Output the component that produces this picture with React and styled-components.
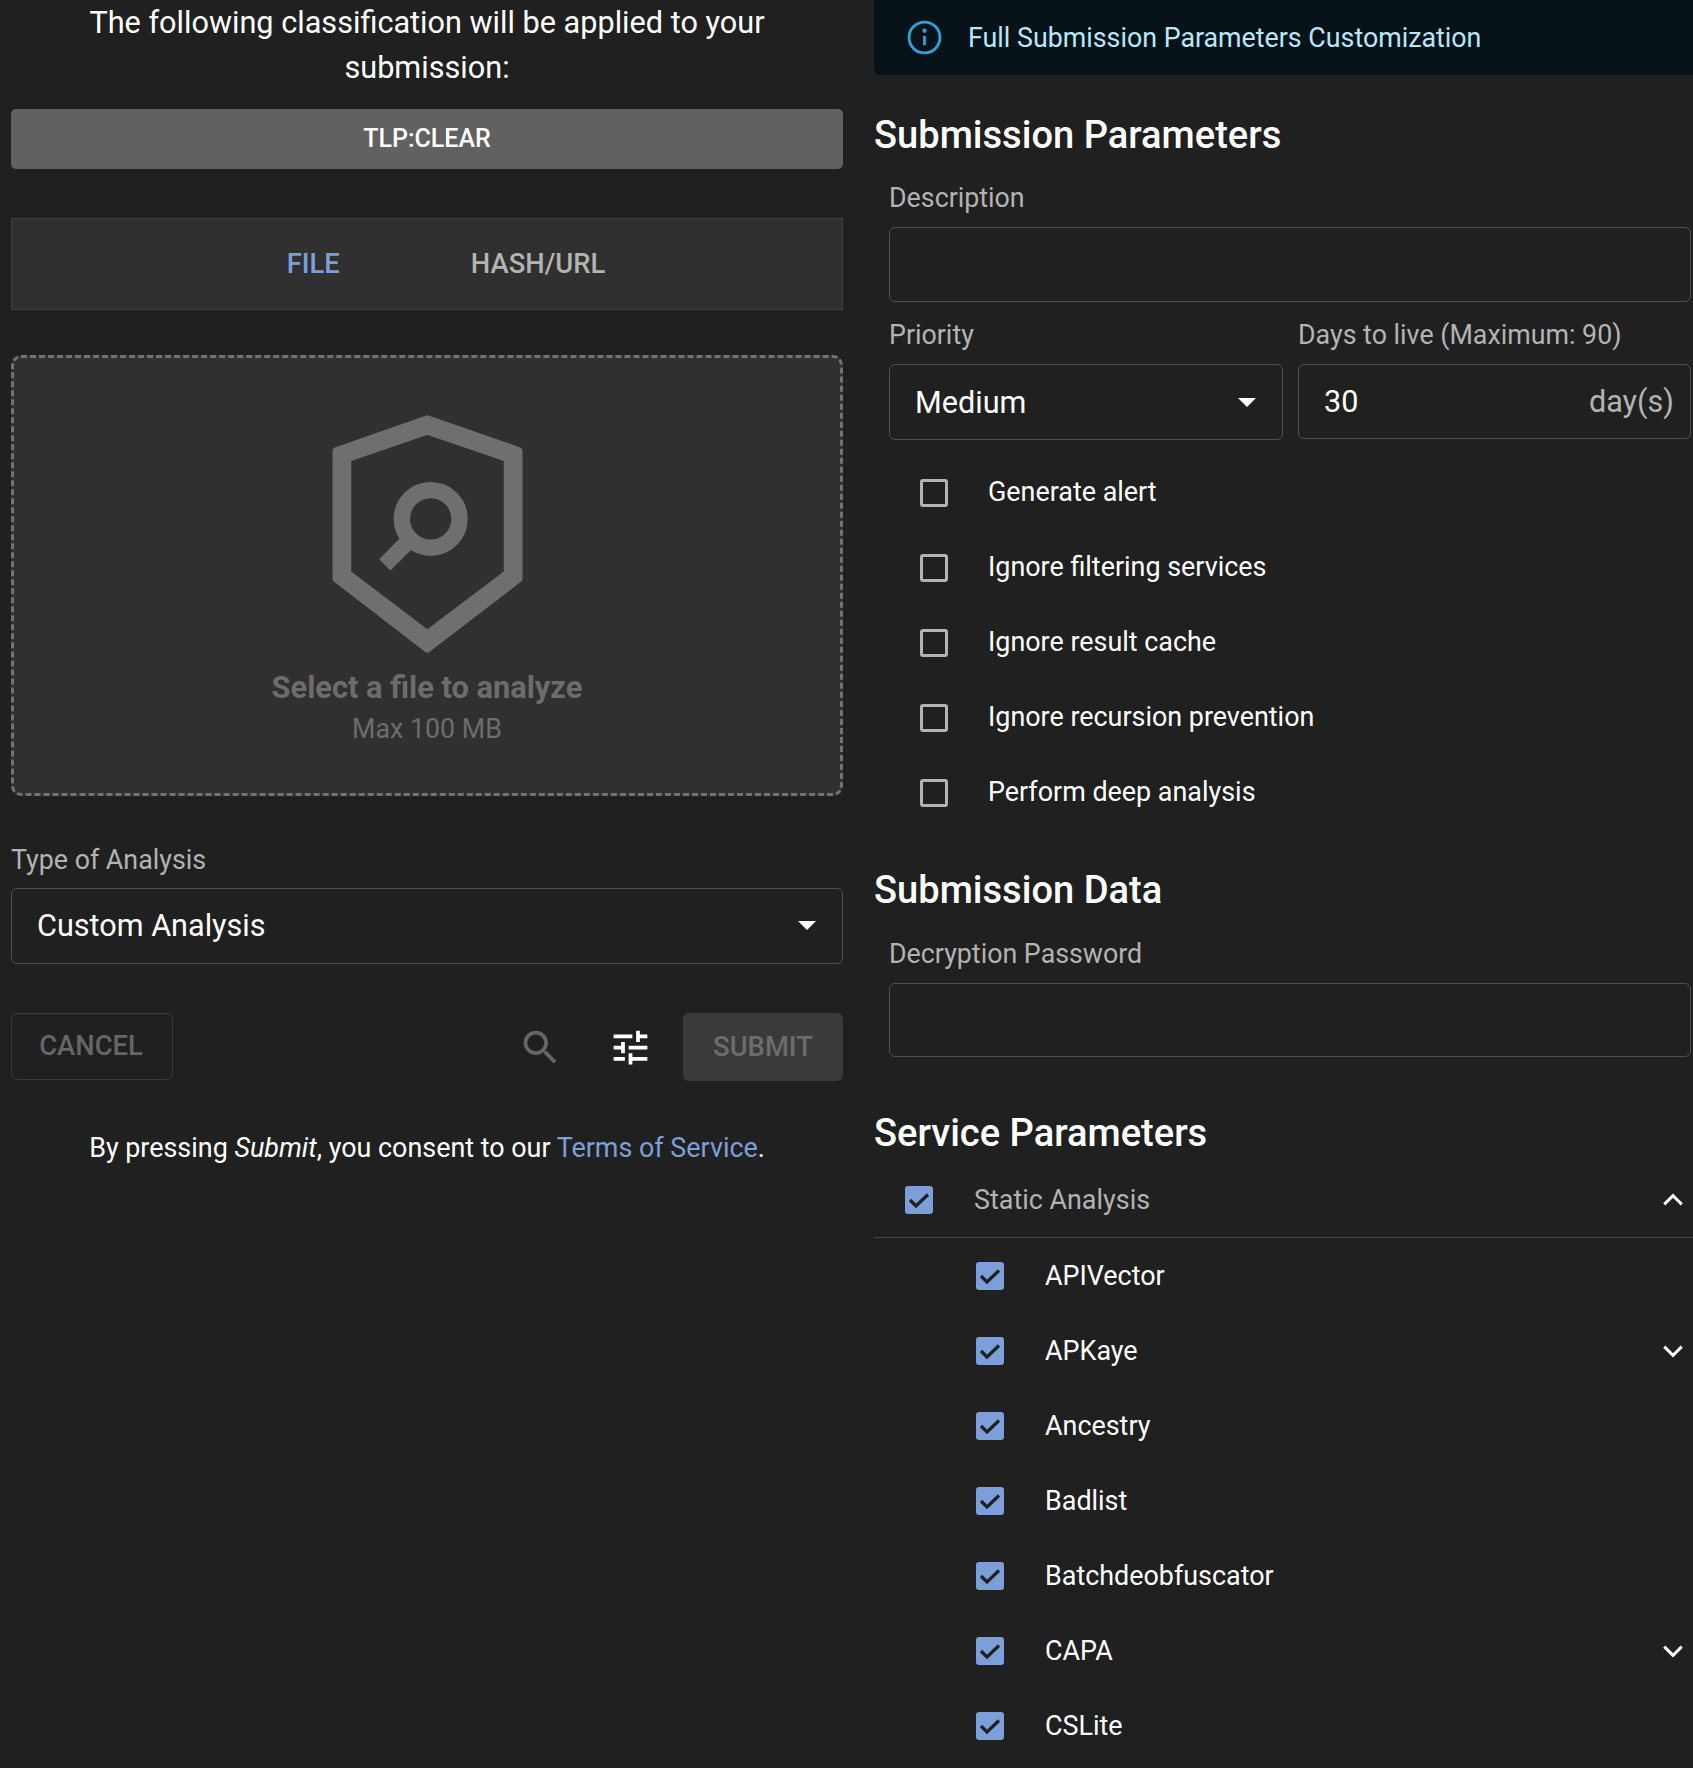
import React from 'react';
import styled, { createGlobalStyle } from 'styled-components';

const Global = createGlobalStyle`
  html, body { margin: 0; padding: 0; background: #202020; }
  body { font-family: Roboto, "Liberation Sans", sans-serif; color: #fff; }
`;

const Page = styled.div`
  height: 1768px;
  overflow: hidden;
  display: grid;
  grid-template-columns: 832px 819px;
  column-gap: 31px;
  padding-left: 11px;
  box-sizing: border-box;
  background: #202020;
`;
const LeftColumn = styled.div`display: flex; flex-direction: column;`;
const Intro = styled.div`
  font-size: 30.65px; line-height: 45px; text-align: center; padding: 0 60px; margin-bottom: 19px;
`;
const ClassBar = styled.div`
  height: 60px; box-sizing: border-box; padding-bottom: 2px; border-radius: 5px; background: #616161; color: #fff;
  display: flex; align-items: center; justify-content: center;
  font-size: 25px; font-weight: 500;
`;
const Tabs = styled.div`
  margin-top: 49px; height: 92px; box-sizing: border-box;
  background: #303030; border: 1px solid #404040; padding-left: 38px;
  display: flex; align-items: center; justify-content: center; gap: 131px;
`;
const Tab = styled.div`
  font-size: 27.4px; font-weight: 500;
  color: ${p => (p.$active ? '#7c9fd9' : '#b3b3b3')};
`;
const Drop = styled.div`
  margin-top: 45px; height: 441px; box-sizing: border-box;
  border: 3px dashed #727272; border-radius: 10px; background: #303030;
  display: flex; flex-direction: column; align-items: center; padding-top: 54px;
`;
const DropTitle = styled.div`font-size: 30.8px; font-weight: 700; color: #6c6c6c; margin-top: 9px; line-height: 45px;`;
const DropSub = styled.div`font-size: 26.8px; color: #6c6c6c; line-height: 38px;`;
const FieldLabel = styled.div`
  font-size: 26.8px; line-height: 40px; color: #b3b3b3;
  margin-top: ${p => p.$top || 0}px;
`;
const SelectBox = styled.div`
  height: 76px; box-sizing: border-box; margin-top: 9px;
  border: 1px solid #4f4f4f; border-radius: 6px;
  display: flex; align-items: center; justify-content: space-between;
  padding: 0 26px 0 25px; font-size: 30.6px; color: #fff;
`;
const AnalysisSelect = styled(SelectBox)`padding-bottom: 2px; margin-top: 8px;`;
const Caret = styled.span`
  width: 0; height: 0; border-left: 9px solid transparent; border-right: 9px solid transparent;
  border-top: 9px solid #fff;
`;
const Actions = styled.div`
  margin-top: 49px; height: 68px; display: flex; align-items: flex-start;
`;
const CancelButton = styled.div`
  width: 162px; height: 67px; box-sizing: border-box; padding: 0 2px 1px 0; border: 1px solid #3c3c3c; border-radius: 6px;
  display: flex; align-items: center; justify-content: center;
  color: #666; font-size: 27.4px; font-weight: 500;
`;
const Spacer = styled.div`flex: 1;`;
const IconSlot = styled.div`
  width: 90px; height: 68px; display: flex; align-items: center; justify-content: center;
`;
const SubmitButton = styled.div`
  width: 160px; height: 68px; box-sizing: border-box; padding-bottom: 1px; margin-left: 8px; border-radius: 6px; background: #3a3a3a;
  display: flex; align-items: center; justify-content: center;
  color: #6c6c6c; font-size: 27.4px; font-weight: 500;
`;
const Consent = styled.div`
  margin-top: 45px; font-size: 26.9px; line-height: 45px; text-align: center;
  a { color: #7c9fd9; text-decoration: none; }
`;

const RightColumn = styled.div`display: flex; flex-direction: column;`;
const Notice = styled.div`
  height: 75px; background: #071318; border-radius: 0 0 0 6px; color: #b8e7fb;
  display: flex; align-items: center; padding-left: 32px; gap: 25px; font-size: 26.8px;
`;
const Heading = styled.h2`
  margin: ${p => p.$top || 0}px 0 0; font-size: 38.1px; font-weight: 500; line-height: 50px; color: #fff;
`;
const Indented = styled.div`padding-left: 15px; display: flex; flex-direction: column;`;
const TextBox = styled.div`
  height: ${p => p.$h || 75}px; box-sizing: border-box; margin-top: 9px; width: 802px;
  border: 1px solid #4f4f4f; border-radius: 6px;
`;
const TwoCols = styled.div`display: grid; grid-template-columns: 394px 393px; column-gap: 15px; margin-top: 13px;`;
const Col = styled.div`display: flex; flex-direction: column;`;
const DaysBox = styled.div`
  height: 75px; box-sizing: border-box; margin-top: 9px;
  border: 1px solid #4f4f4f; border-radius: 6px;
  display: flex; align-items: center; justify-content: space-between;
  padding: 0 16px 0 25px; font-size: 30.6px;
`;
const Suffix = styled.span`color: #b3b3b3;`;
const Options = styled.div`margin-top: 15px; display: flex; flex-direction: column;`;
const Row = styled.div`
  height: 75px; display: flex; align-items: center; font-size: 26.9px;
  padding-left: ${p => p.$indent}px;
  margin-top: ${p => p.$top || 0}px;
  color: ${p => (p.$muted ? '#b3b3b3' : '#fff')};
  border-bottom: ${p => (p.$divider ? '1px solid #464646' : 'none')};
  box-sizing: border-box;
`;
const OptionLabel = styled.span`margin-top: -1px;`;
const Box = styled.span`
  width: 28px; height: 28px; box-sizing: border-box; flex: none; border-radius: 3px;
  border: ${p => (p.$checked ? 'none' : '3px solid #b3b3b3')};
  background: ${p => (p.$checked ? '#7c9fd9' : 'transparent')};
  margin-right: ${p => p.$gap}px;
  display: flex; align-items: center; justify-content: center;
`;
const Grow = styled.span`flex: 1;`;
const Chevron = styled.svg`
  width: 30px; height: 30px; margin-right: 5px; flex: none;
`;

const Shield = () => (
  <svg width="197" height="244" viewBox="147 37 587 728" style={{ display: 'block' }}>
    <path fillRule="evenodd" fill="#6f6f6f" stroke="#6f6f6f" strokeWidth="20" strokeLinejoin="round"
      d="M440 57L714 152V535L440 745L167 535V152ZM440 95L203 176V518L440 698L678 518V176Z" />
    <circle cx="450" cy="356" r="86" fill="none" stroke="#6f6f6f" strokeWidth="49" />
    <path d="M378 428L313 493" stroke="#6f6f6f" strokeWidth="48" fill="none" />
  </svg>
);
const Search = () => (
  <svg width="45" height="45" viewBox="0 0 24 24" fill="#666">
    <path d="M15.5 14h-.79l-.28-.27C15.41 12.59 16 11.11 16 9.5 16 5.91 13.09 3 9.5 3S3 5.91 3 9.5 5.91 16 9.5 16c1.61 0 3.09-.59 4.23-1.57l.27.28v.79l5 4.99L20.49 19l-4.99-5zm-6 0C7.01 14 5 11.99 5 9.5S7.01 5 9.5 5 14 7.01 14 9.5 11.99 14 9.5 14z" />
  </svg>
);
const Tune = () => (
  <svg width="45" height="45" viewBox="0 0 24 24" fill="#fff">
    <path d="M3 17v2h6v-2H3zM3 5v2h10V5H3zm10 16v-2h8v-2h-8v-2h-2v6h2zM7 9v2H3v2h4v2h2V9H7zm14 4v-2H11v2h10zm-6-4h2V7h4V5h-4V3h-2v6z" />
  </svg>
);
const Info = () => (
  <svg width="37" height="37" viewBox="0 0 24 24" fill="none" stroke="#29a5dd" strokeWidth="1.8">
    <circle cx="12" cy="12" r="10" />
    <path d="M12 11v6" />
    <circle cx="12" cy="7.6" r=".5" fill="#29a5dd" />
  </svg>
);
const Check = () => (
  <svg width="28" height="28" viewBox="0 0 28 28" fill="none" stroke="#202020" strokeWidth="3.2">
    <path d="M5 14L11 20L23 8.5" />
  </svg>
);
const ChevronIcon = ({ up }) => (
  <Chevron viewBox="0 0 24 24" fill="none" stroke="#fff" strokeWidth="2.4">
    <path d={up ? 'M5 15.5L12 8.5L19 15.5' : 'M5 8.5L12 15.5L19 8.5'} />
  </Chevron>
);

const options = ['Generate alert', 'Ignore filtering services', 'Ignore result cache', 'Ignore recursion prevention', 'Perform deep analysis'];
const services = [['APIVector'], ['APKaye', true], ['Ancestry'], ['Badlist'], ['Batchdeobfuscator'], ['CAPA', true], ['CSLite']];

export default function App() {
  return (
    <Page>
      <Global />
      <LeftColumn>
        <Intro>The following classification will be applied to your submission:</Intro>
        <ClassBar>TLP:CLEAR</ClassBar>
        <Tabs>
          <Tab $active>FILE</Tab>
          <Tab>HASH/URL</Tab>
        </Tabs>
        <Drop>
          <Shield />
          <DropTitle>Select a file to analyze</DropTitle>
          <DropSub>Max 100 MB</DropSub>
        </Drop>
        <FieldLabel $top={44}>Type of Analysis</FieldLabel>
        <AnalysisSelect>Custom Analysis<Caret /></AnalysisSelect>
        <Actions>
          <CancelButton>CANCEL</CancelButton>
          <Spacer />
          <IconSlot><Search /></IconSlot>
          <IconSlot><Tune /></IconSlot>
          <SubmitButton>SUBMIT</SubmitButton>
        </Actions>
        <Consent>By pressing <em>Submit</em>, you consent to our <a href="#terms">Terms of Service</a>.</Consent>
      </LeftColumn>
      <RightColumn>
        <Notice><Info />Full Submission Parameters Customization</Notice>
        <Heading $top={35}>Submission Parameters</Heading>
        <Indented>
          <FieldLabel $top={18}>Description</FieldLabel>
          <TextBox />
          <TwoCols>
            <Col>
              <FieldLabel>Priority</FieldLabel>
              <SelectBox>Medium<Caret /></SelectBox>
            </Col>
            <Col>
              <FieldLabel>Days to live (Maximum: 90)</FieldLabel>
              <DaysBox>30<Suffix>day(s)</Suffix></DaysBox>
            </Col>
          </TwoCols>
        </Indented>
        <Options>
          {options.map(o => (
            <Row key={o} $indent={46}><Box $gap={40} /><OptionLabel>{o}</OptionLabel></Row>
          ))}
        </Options>
        <Heading $top={35}>Submission Data</Heading>
        <Indented>
          <FieldLabel $top={19}>Decryption Password</FieldLabel>
          <TextBox $h={74} />
        </Indented>
        <Heading $top={51}>Service Parameters</Heading>
        <Row $indent={31} $muted $divider $top={5}>
          <Box $checked $gap={41}><Check /></Box>Static Analysis<Grow /><ChevronIcon up />
        </Row>
        {services.map(([name, more]) => (
          <Row key={name} $indent={102}>
            <Box $checked $gap={41}><Check /></Box>{name}<Grow />{more && <ChevronIcon />}
          </Row>
        ))}
      </RightColumn>
    </Page>
  );
}
